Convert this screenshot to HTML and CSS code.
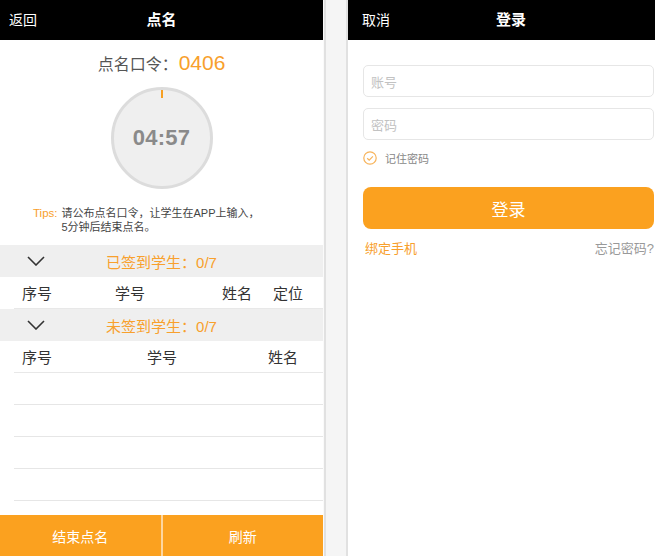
FILE: index.html
```html
<!DOCTYPE html>
<html lang="zh-CN">
<head>
<meta charset="utf-8">
<title>点名 / 登录</title>
<link rel="stylesheet" href="styles.css">
</head>
<body>
<div class="page">
  <section class="screen roll">
    <header class="nav">
      <span class="nav-side">返回</span>
      <span class="nav-title">点名</span>
      <span class="nav-side"></span>
    </header>

    <div class="command"><span class="command-label">点名口令：</span><span class="command-code">0406</span></div>

    <div class="timer">
      <span class="timer-tick"></span>
      <span class="timer-text">04:57</span>
    </div>

    <div class="tips">
      <span class="tips-label">Tips:</span>
      <span class="tips-text">请公布点名口令，让学生在APP上输入，<br>5分钟后结束点名。</span>
    </div>

    <div class="list">
      <div class="group-bar">
        <svg class="chevron" width="18" height="10" viewBox="0 0 18 10"><polyline points="1,1 9,9 17,1" fill="none" stroke="#333" stroke-width="1.6"/></svg>
        <span class="group-title">已签到学生：0/7</span>
        <span></span>
      </div>
      <div class="row head head-four">
        <span>序号</span><span>学号</span><span>姓名</span><span>定位</span>
      </div>
      <div class="group-bar">
        <svg class="chevron" width="18" height="10" viewBox="0 0 18 10"><polyline points="1,1 9,9 17,1" fill="none" stroke="#333" stroke-width="1.6"/></svg>
        <span class="group-title">未签到学生：0/7</span>
        <span></span>
      </div>
      <div class="row head head-three">
        <span>序号</span><span>学号</span><span>姓名</span>
      </div>
      <div class="row"></div>
      <div class="row"></div>
      <div class="row"></div>
      <div class="row"></div>
      <div class="row"></div>
    </div>

    <footer class="actions">
      <button class="action">结束点名</button>
      <button class="action">刷新</button>
    </footer>
  </section>

  <div class="divider"></div>

  <section class="screen login">
    <header class="nav">
      <span class="nav-side">取消</span>
      <span class="nav-title">登录</span>
      <span class="nav-side"></span>
    </header>

    <div class="form">
      <div class="field">账号</div>
      <div class="field">密码</div>
      <div class="remember">
        <svg width="14" height="14" viewBox="0 0 14 14"><circle cx="7" cy="7" r="6.2" fill="none" stroke="#f7b35a" stroke-width="1.2"/><polyline points="4.2,7.3 6.2,9.2 9.9,5.3" fill="none" stroke="#f7b35a" stroke-width="1.2"/></svg>
        <span>记住密码</span>
      </div>
      <button class="submit">登录</button>
      <div class="links">
        <span class="link-bind">绑定手机</span>
        <span class="link-forgot">忘记密码?</span>
      </div>
    </div>
  </section>
</div>
</body>
</html>
```

FILE: styles.css
```css
* { box-sizing: border-box; }

html, body {
  margin: 0;
  padding: 0;
  background: #fff;
}

body {
  font-family: "Liberation Sans", "Noto Sans CJK SC", sans-serif;
}

.page {
  display: flex;
  width: 655px;
  height: 556px;
  overflow: hidden;
}

.screen {
  display: flex;
  flex-direction: column;
  height: 556px;
  background: #fff;
}
.screen > * { flex-shrink: 0; }

.roll { flex: 0 0 323px; }
.login { flex: 0 0 321px; }

.divider {
  flex: 0 0 25px;
  background: #f5f5f5;
  border-left: 1px solid #fafafa;
  box-shadow: inset 2px 0 #e1e1e1, inset -2px 0 #e1e1e1;
}

/* nav */
.nav {
  height: 40px;
  background: #000;
  color: #fff;
  display: grid;
  grid-template-columns: 1fr auto 1fr;
  align-items: center;
  padding: 0 9px;
  font-size: 14px;
  line-height: 20px;
}
.login .nav { padding-left: 14px; }
.nav-title {
  font-size: 15px;
  font-weight: 700;
}

/* command */
.command {
  margin-top: 12px;
  height: 22px;
  line-height: 22px;
  text-align: center;
  white-space: nowrap;
}
.command-label {
  font-size: 16px;
  color: #555;
}
.command-code {
  font-size: 21px;
  color: #f8a02c;
  margin-left: 1px;
}

/* timer */
.timer {
  position: relative;
  margin: 13px auto 0;
  width: 102px;
  height: 102px;
  border-radius: 50%;
  border: 3px solid #dcdcdc;
  background: #efefef;
  display: flex;
  align-items: center;
  justify-content: center;
}
.timer-tick {
  position: absolute;
  top: 0;
  left: 47px;
  width: 2px;
  height: 8px;
  background: #f7a023;
}
.timer-text {
  font-size: 22px;
  font-weight: 700;
  color: #8a8a8a;
  letter-spacing: 0.2px;
}

/* tips */
.tips {
  margin-top: 17px;
  padding-left: 33px;
  display: flex;
  gap: 4px;
  line-height: 14px;
  white-space: nowrap;
}
.tips-label { color: #f8a02c; font-size: 11.5px; }
.tips-text { color: #444; font-size: 11px; }

/* list */
.list {
  margin-top: 11px;
  flex: 1 1 0;
  min-height: 0;
  overflow: hidden;
}
.group-bar {
  height: 32px;
  background: #efefef;
  display: grid;
  grid-template-columns: 1fr auto 1fr;
  align-items: center;
}
.chevron {
  margin-left: 27px;
  display: block;
}
.group-title {
  font-size: 15px;
  color: #f8a02c;
}
.row {
  height: 32px;
  margin-left: 14px;
  border-bottom: 1px solid #e6e6e6;
}
.head {
  display: grid;
  align-items: center;
  padding-left: 8px;
  font-size: 15px;
  color: #333;
  border-bottom-color: #e8e8e8;
}
.head-four { grid-template-columns: 93px 107px 51px auto; }
.head-three { grid-template-columns: 125px 121px auto; }

/* footer */
.actions {
  height: 41px;
  display: flex;
  background: #fba11f;
}
.action {
  flex: 1;
  border: 0;
  margin: 0;
  padding: 0;
  background: transparent;
  color: #fff;
  font-family: inherit;
  font-size: 14px;
}
.action + .action {
  border-left: 2px solid #fdd6a0;
}

/* login */
.form {
  padding: 25px 15px 0;
  display: flex;
  flex-direction: column;
}
.field {
  height: 32px;
  border: 1px solid #e6e6e6;
  border-radius: 5px;
  padding-left: 7px;
  display: flex;
  align-items: center;
  font-size: 13px;
  color: #c2c2c2;
}
.field + .field { margin-top: 11px; }
.remember {
  margin-top: 10px;
  height: 15px;
  display: flex;
  align-items: center;
  gap: 8px;
  font-size: 11px;
  color: #888;
}
.remember svg { display: block; }
.submit {
  margin-top: 22px;
  height: 42px;
  border: 0;
  border-radius: 8px;
  background: #fba11f;
  color: #fff;
  font-family: inherit;
  font-size: 17px;
}
.links {
  margin-top: 12px;
  display: flex;
  justify-content: space-between;
  font-size: 13px;
  line-height: 16px;
}
.link-bind { color: #f8a02c; padding-left: 2px; }
.link-forgot { color: #999; }
```
